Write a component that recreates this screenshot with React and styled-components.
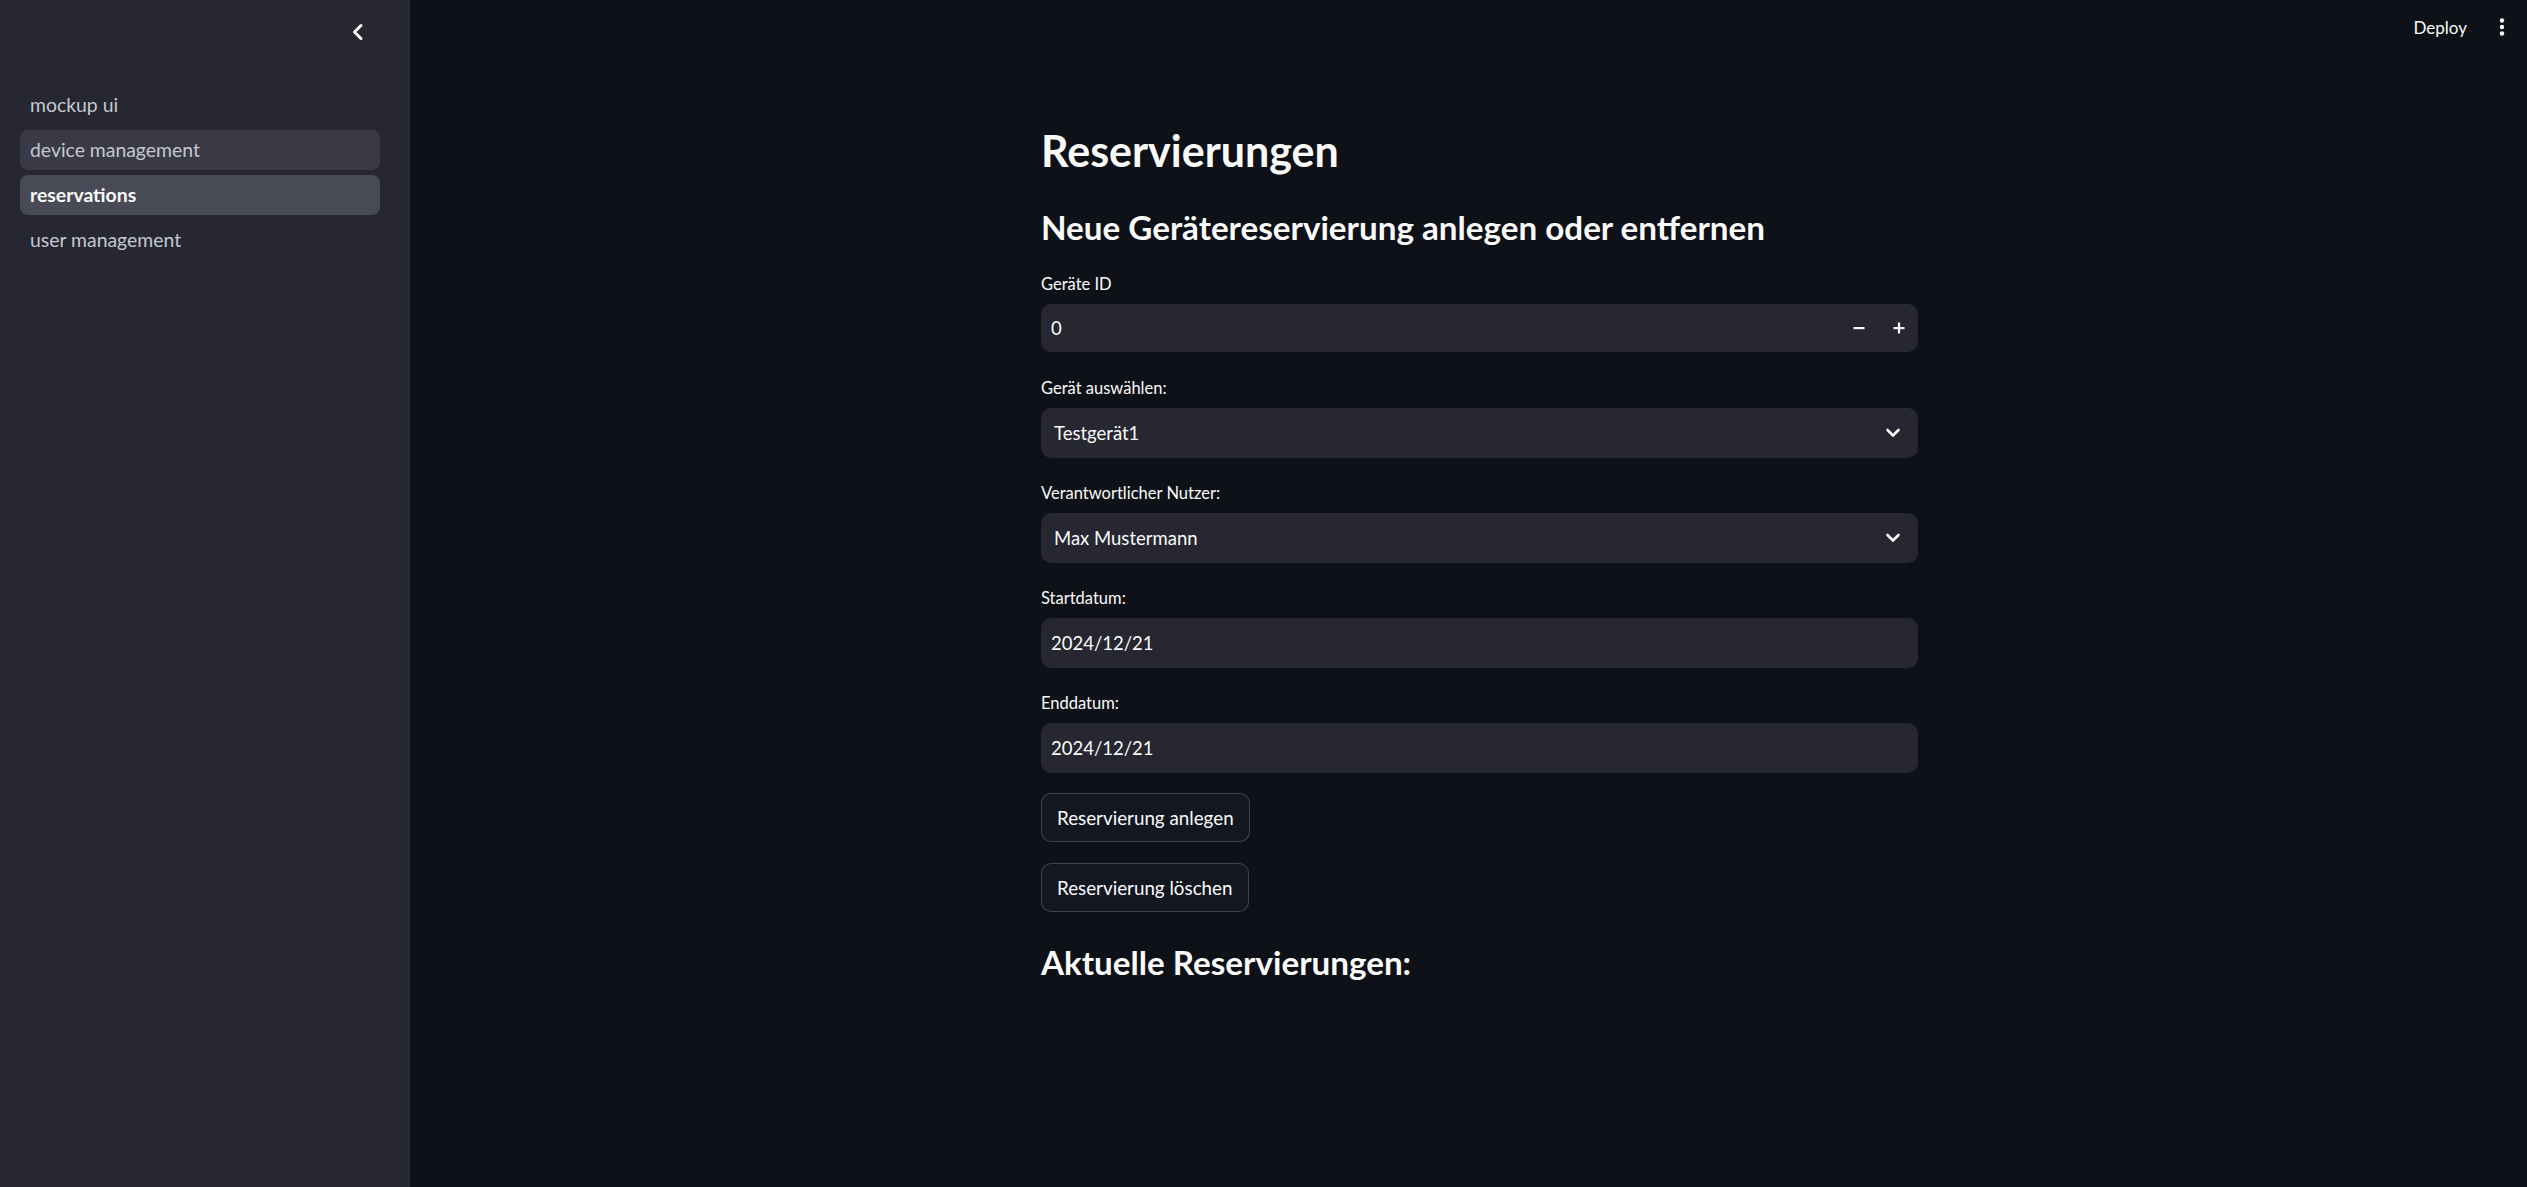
import React from "react";
import styled, { createGlobalStyle } from "styled-components";

const Global = createGlobalStyle`
  html, body { margin: 0; padding: 0; background: #0e1117; }
  body { font-family: Lato, "Noto Sans", sans-serif; color: #fafafa; }
  * { box-sizing: border-box; }
`;

const Shell = styled.div`
  display: flex;
  width: 100%;
  height: 1187px;
  background: #0e1117;
  overflow: hidden;
`;

const Sidebar = styled.aside`
  width: 410px;
  flex: 0 0 410px;
  background: #262730;
  display: flex;
  flex-direction: column;
`;

const SideHeader = styled.div`
  height: 64px;
  display: flex;
  align-items: center;
  justify-content: flex-end;
  padding-right: 37px;
`;

const IconButton = styled.button`
  width: 30px;
  height: 30px;
  border: none;
  background: transparent;
  padding: 0;
  display: flex;
  align-items: center;
  justify-content: center;
  color: #fafafa;
  cursor: pointer;
`;

const Nav = styled.nav`
  display: flex;
  flex-direction: column;
  gap: 5px;
  padding: 20.5px 30px 0 20px;
`;

const NavItem = styled.a`
  display: flex;
  align-items: center;
  height: 40px;
  padding: 0 10px;
  border-radius: 8px;
  font-size: 19.4px;
  text-decoration: none;
  color: ${(p) => (p.$active ? "#fafafa" : "#c4c7d0")};
  font-weight: ${(p) => (p.$active ? 700 : 400)};
  background: ${(p) =>
    p.$active ? "#484a56" : p.$hover ? "#393a46" : "transparent"};
`;

const Main = styled.main`
  flex: 1;
  display: flex;
  flex-direction: column;
`;

const TopBar = styled.header`
  height: 54px;
  display: flex;
  align-items: center;
  justify-content: flex-end;
  gap: 8px;
  padding-right: 10px;
`;

const DeployButton = styled.button`
  border: none;
  background: transparent;
  color: #fafafa;
  font-family: inherit;
  font-size: 17px;
  padding: 0 12px;
  height: 36px;
  cursor: pointer;
`;

const ContentWrap = styled.div`
  display: flex;
  justify-content: center;
  padding-left: 22px;
`;

const Content = styled.div`
  width: 877px;
  display: flex;
  flex-direction: column;
  padding-top: 71px;
`;

const Title = styled.h2`
  margin: 0;
  font-size: 43px;
  line-height: 52px;
  font-weight: 700;
  color: #fafafa;
`;

const Subheader = styled.h3`
  margin: ${(p) => p.$mt || "0"} 0 0 0;
  font-size: 33.2px;
  line-height: 42px;
  font-weight: 700;
  color: #fafafa;
`;

const Field = styled.div`
  display: flex;
  flex-direction: column;
  margin-top: ${(p) => p.$mt || "20px"};
`;

const Label = styled.label`
  height: 30px;
  line-height: 30px;
  font-size: 16.5px;
  margin-bottom: 5px;
  color: #fafafa;
`;

const InputBox = styled.div`
  height: ${(p) => p.$h || "50px"};
  background: #262730;
  border-radius: 10px;
  display: flex;
  align-items: center;
  padding: 0 ${(p) => (p.$select ? "17px" : "8px")} 0
    ${(p) => (p.$select ? "13px" : "10px")};
  font-size: 18.5px;
  color: #fafafa;
`;

const InputText = styled.span`
  flex: 1;
`;

const Stepper = styled.div`
  display: flex;
  align-items: center;
  gap: 18px;
`;

const StepButton = styled.button`
  width: 22px;
  height: 22px;
  border: none;
  padding: 0;
  background: transparent;
  display: flex;
  align-items: center;
  justify-content: center;
  cursor: pointer;
`;

const Button = styled.button`
  align-self: flex-start;
  margin-top: ${(p) => p.$mt || "20px"};
  height: 49px;
  padding: 0 15px;
  border-radius: 10px;
  border: 1px solid rgba(250, 250, 250, 0.2);
  background: #131720;
  color: #fafafa;
  font-family: inherit;
  font-size: 18.8px;
  cursor: pointer;
`;

const ChevronLeft = () => (
  <svg width="30" height="30" viewBox="0 0 30 30" fill="none">
    <path d="M18 8.5 L11.5 15 L18 21.5" stroke="#fafafa" strokeWidth="3" strokeLinecap="round" strokeLinejoin="round" />
  </svg>
);

const ChevronDown = () => (
  <svg width="16" height="12" viewBox="0 0 16 12" fill="none">
    <path d="M2.5 3 L8 8.5 L13.5 3" stroke="#fafafa" strokeWidth="2.6" strokeLinecap="round" strokeLinejoin="round" />
  </svg>
);

const Minus = () => (
  <svg width="14" height="14" viewBox="0 0 14 14">
    <rect x="1.5" y="6" width="11" height="2.2" fill="#fafafa" />
  </svg>
);

const Plus = () => (
  <svg width="14" height="14" viewBox="0 0 14 14">
    <rect x="1.5" y="6" width="11" height="2.2" fill="#fafafa" />
    <rect x="5.9" y="1.5" width="2.2" height="11" fill="#fafafa" />
  </svg>
);

const Kebab = () => (
  <svg width="30" height="30" viewBox="0 0 30 30">
    <circle cx="15" cy="8.5" r="2.2" fill="#fafafa" />
    <circle cx="15" cy="15" r="2.2" fill="#fafafa" />
    <circle cx="15" cy="21.5" r="2.2" fill="#fafafa" />
  </svg>
);

const navItems = [
  { label: "mockup ui" },
  { label: "device management", hover: true },
  { label: "reservations", active: true },
  { label: "user management" },
];

export default function App() {
  return (
    <>
      <Global />
      <Shell>
        <Sidebar>
          <SideHeader>
            <IconButton aria-label="Sidebar einklappen">
              <ChevronLeft />
            </IconButton>
          </SideHeader>
          <Nav>
            {navItems.map((n) => (
              <NavItem key={n.label} $active={n.active} $hover={n.hover}>
                {n.label}
              </NavItem>
            ))}
          </Nav>
        </Sidebar>
        <Main>
          <TopBar>
            <DeployButton>Deploy</DeployButton>
            <IconButton aria-label="Menü">
              <Kebab />
            </IconButton>
          </TopBar>
          <ContentWrap>
            <Content>
              <Title>Reservierungen</Title>
              <Subheader $mt="29px">Neue Gerätereservierung anlegen oder entfernen</Subheader>
              <Field $mt="21px">
                <Label>Geräte ID</Label>
                <InputBox $h="48px">
                  <InputText>0</InputText>
                  <Stepper>
                    <StepButton><Minus /></StepButton>
                    <StepButton><Plus /></StepButton>
                  </Stepper>
                </InputBox>
              </Field>
              <Field $mt="21px">
                <Label>Gerät auswählen:</Label>
                <InputBox $select>
                  <InputText>Testgerät1</InputText>
                  <ChevronDown />
                </InputBox>
              </Field>
              <Field>
                <Label>Verantwortlicher Nutzer:</Label>
                <InputBox $select>
                  <InputText>Max Mustermann</InputText>
                  <ChevronDown />
                </InputBox>
              </Field>
              <Field>
                <Label>Startdatum:</Label>
                <InputBox>
                  <InputText>2024/12/21</InputText>
                </InputBox>
              </Field>
              <Field>
                <Label>Enddatum:</Label>
                <InputBox>
                  <InputText>2024/12/21</InputText>
                </InputBox>
              </Field>
              <Button>Reservierung anlegen</Button>
              <Button $mt="21px">Reservierung löschen</Button>
              <Subheader $mt="29px">Aktuelle Reservierungen:</Subheader>
            </Content>
          </ContentWrap>
        </Main>
      </Shell>
    </>
  );
}
